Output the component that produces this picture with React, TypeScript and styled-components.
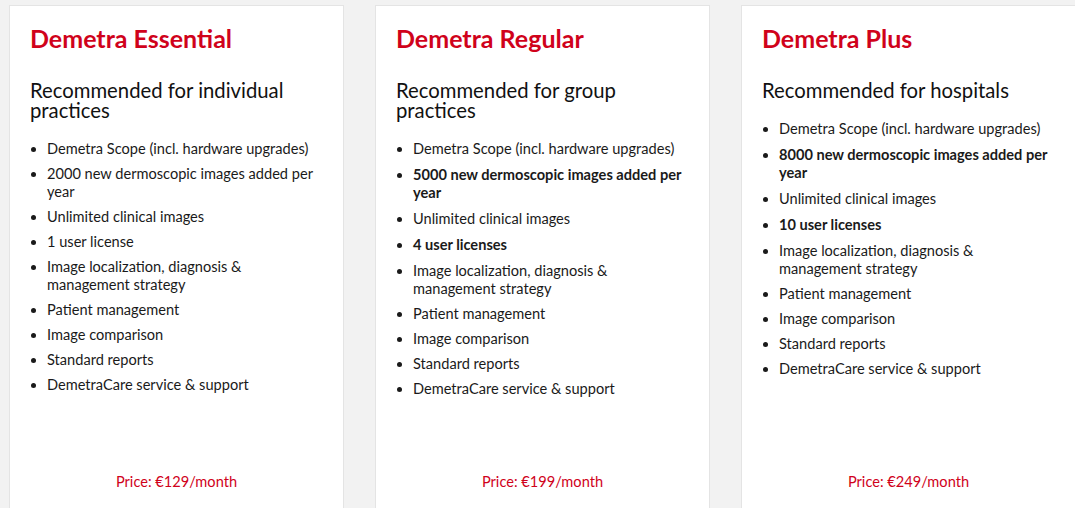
import React, { FC } from "react";
import styled, { createGlobalStyle } from "styled-components";

type Feature = { text: string; bold?: boolean };

type Plan = {
  name: string;
  audience: string;
  features: Feature[];
  price: string;
};

const plans: Plan[] = [
  {
    name: "Demetra Essential",
    audience: "Recommended for individual practices",
    features: [
      { text: "Demetra Scope (incl. hardware upgrades)" },
      { text: "2000 new dermoscopic images added per year" },
      { text: "Unlimited clinical images" },
      { text: "1 user license" },
      { text: "Image localization, diagnosis & management strategy" },
      { text: "Patient management" },
      { text: "Image comparison" },
      { text: "Standard reports" },
      { text: "DemetraCare service & support" },
    ],
    price: "Price: €129/month",
  },
  {
    name: "Demetra Regular",
    audience: "Recommended for group practices",
    features: [
      { text: "Demetra Scope (incl. hardware upgrades)" },
      { text: "5000 new dermoscopic images added per year", bold: true },
      { text: "Unlimited clinical images" },
      { text: "4 user licenses", bold: true },
      { text: "Image localization, diagnosis & management strategy" },
      { text: "Patient management" },
      { text: "Image comparison" },
      { text: "Standard reports" },
      { text: "DemetraCare service & support" },
    ],
    price: "Price: €199/month",
  },
  {
    name: "Demetra Plus",
    audience: "Recommended for hospitals",
    features: [
      { text: "Demetra Scope (incl. hardware upgrades)" },
      { text: "8000 new dermoscopic images added per year", bold: true },
      { text: "Unlimited clinical images" },
      { text: "10 user licenses", bold: true },
      { text: "Image localization, diagnosis & management strategy" },
      { text: "Patient management" },
      { text: "Image comparison" },
      { text: "Standard reports" },
      { text: "DemetraCare service & support" },
    ],
    price: "Price: €249/month",
  },
];

export default function App() {
  return (
    <>
      <GlobalStyle />
      <PlansWrapper>
        {plans.map((plan) => (
          <PlanCard key={plan.name} plan={plan} />
        ))}
      </PlansWrapper>
    </>
  );
}

const PlanCard: FC<{ plan: Plan }> = ({ plan }) => (
  <CardWrapper>
    <PlanTitle>{plan.name}</PlanTitle>
    <Audience>{plan.audience}</Audience>
    <FeatureList>
      {plan.features.map((f) => (
        <FeatureItem key={f.text} $bold={f.bold}>
          {f.text}
        </FeatureItem>
      ))}
    </FeatureList>
    <Price>{plan.price}</Price>
  </CardWrapper>
);

const GlobalStyle = createGlobalStyle`
  html, body {
    margin: 0;
    padding: 0;
    background: #f2f2f2;
    overflow: hidden;
  }
  body {
    font-family: Lato, "Open Sans", sans-serif;
    color: #1a1a1a;
  }
`;

const PlansWrapper = styled.main`
  display: flex;
  flex-direction: row;
  align-items: stretch;
  gap: 31px;
  padding: 5px 0 0 9px;
  width: 1200px;
`;

const CardWrapper = styled.section`
  box-sizing: border-box;
  display: flex;
  flex-direction: column;
  flex-shrink: 0;
  width: 335px;
  min-height: 520px;
  padding: 19px 20px 33px 20px;
  background: #ffffff;
  border: 1px solid #e4e4e4;
`;

const PlanTitle = styled.h2`
  margin: 0 0 28px 0;
  font-size: 25px;
  line-height: 27px;
  font-weight: 700;
  color: #d0021b;
`;

const Audience = styled.h3`
  margin: 0 0 20px 0;
  font-size: 20.3px;
  line-height: 20px;
  font-weight: 400;
  color: #111111;
`;

const FeatureList = styled.ul`
  margin: 0;
  padding-left: 17px;
  list-style: disc;
`;

const FeatureItem = styled.li<{ $bold?: boolean }>`
  margin: 0 0 7px 0;
  padding: ${(p) => (p.$bold ? "1px 0" : "0")};
  font-size: 14.6px;
  line-height: 18px;
  font-weight: ${(p) => (p.$bold ? 700 : 400)};
  color: #1a1a1a;
`;

const Price = styled.p`
  margin: auto 0 0 0;
  text-align: center;
  font-size: 14.6px;
  line-height: 18px;
  color: #d0021b;
`;
